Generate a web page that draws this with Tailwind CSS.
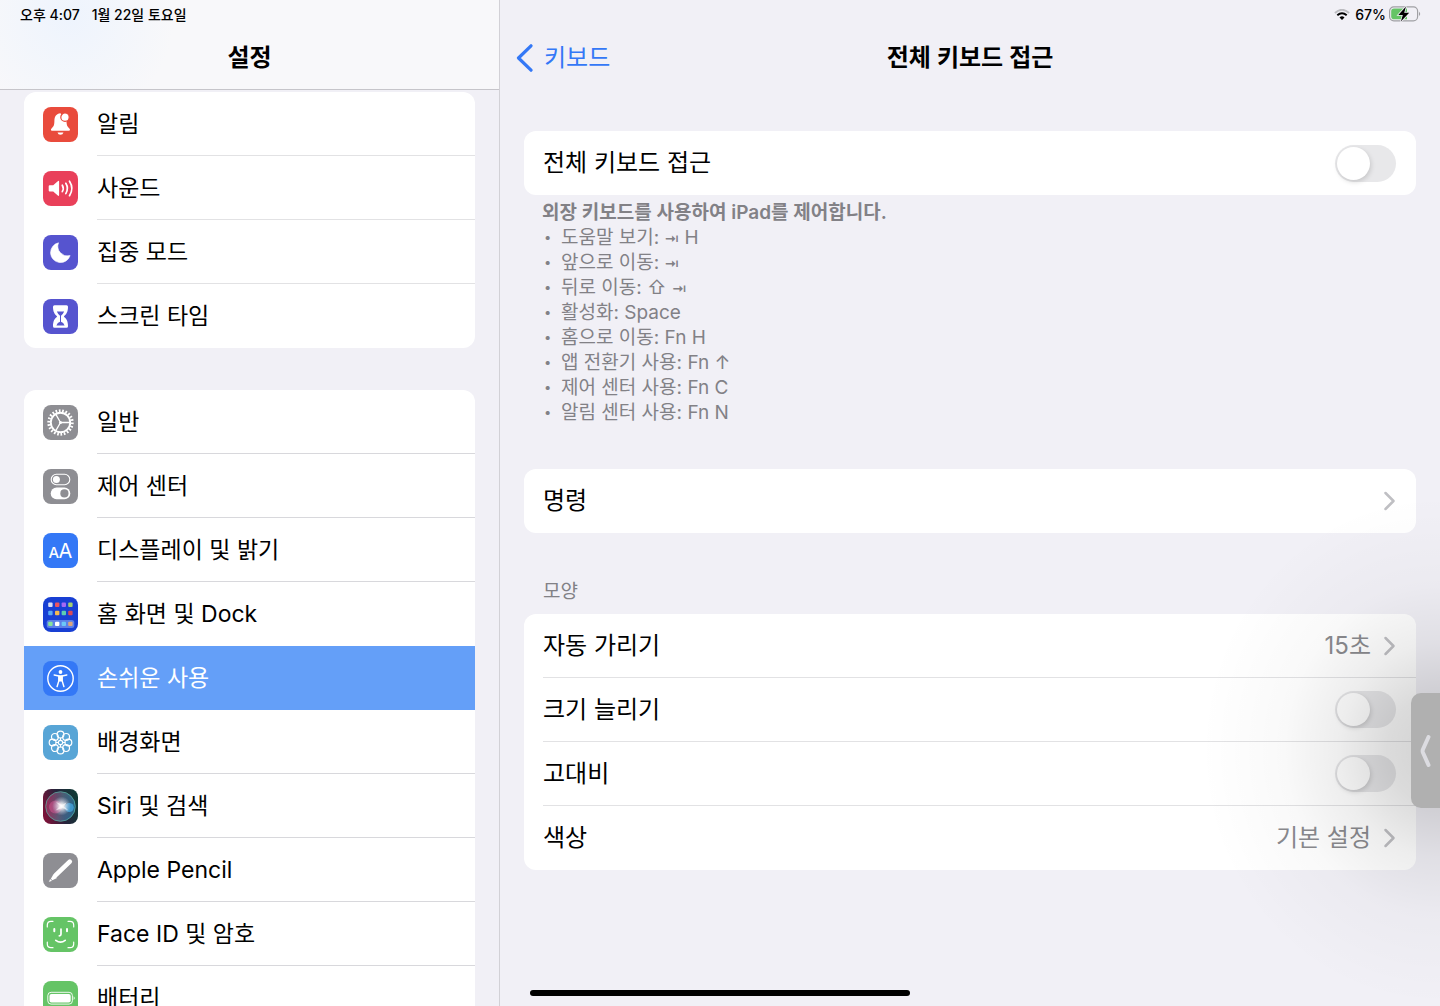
<!DOCTYPE html>
<html lang="ko">
<head>
<meta charset="utf-8">
<meta name="viewport" content="width=device-width, initial-scale=1">
<title>설정</title>
<script src="https://cdn.jsdelivr.net/npm/@tailwindcss/browser@4"></script>
</head>
<body class="bg-[#f1f0f6] text-black font-['Inter','Noto_Sans_CJK_KR',sans-serif]">
<div class="relative grid h-screen grid-cols-[25fr_47fr] overflow-hidden">

  <!-- Sidebar -->
  <aside class="flex min-h-0 flex-col border-r border-[#d2d1d6]">
    <header class="h-[90px] shrink-0 border-b border-[#c6c5ca] bg-[#f8f8fa] bg-[radial-gradient(circle_at_14%_20%,#eef4fd_0,#f8f8fa_24%)]">
      <div class="flex h-7 items-center gap-3 pl-5 text-[14px] font-medium"><span>오후 4:07</span><span>1월 22일 토요일</span></div>
      <h1 class="flex h-[59px] items-center justify-center text-[24px] font-semibold">설정</h1>
    </header>
    <nav class="flex min-h-0 flex-1 flex-col gap-[42px] overflow-y-auto px-6 pt-[2px] text-[23px] leading-8 [scrollbar-width:none]">
      <ul class="shrink-0 overflow-hidden rounded-xl bg-white">
        <li><a href="#" class="flex h-16 items-center gap-[19px] pl-[19px]">
          <svg class="size-[35px] shrink-0" viewBox="0 0 35 35"><rect width="35" height="35" rx="8" fill="#e94b3c"/><path d="M17.4 6.3c-4 .4-6 3.3-6 7.300 0 4.500-.7 6-2.600 7.600-1.300 1.100-1.200 2.500.3 2.500h16.700c1.500 0 1.600-1.400.3-2.500-1.900-1.600-2.500-3.100-2.700-7.600z" fill="#fff"/><path d="M14.500 25.400h6a3.100 3.100 0 0 1-6 0z" fill="#fff"/><circle cx="22" cy="10.200" r="4.200" fill="#fff" stroke="#e94b3c" stroke-width="1.200"/></svg>
          <span class="flex h-16 flex-1 items-center border-b border-[#e2e2e4]">알림</span></a></li>
        <li><a href="#" class="flex h-16 items-center gap-[19px] pl-[19px]">
          <svg class="size-[35px] shrink-0" viewBox="0 0 35 35"><rect width="35" height="35" rx="8" fill="#e9405a"/><path d="M5.700 15.300q0-1 1-1h3.500l4.600-4.100q1.300-.9 1.300.5v13.400q0 1.400-1.300.5l-4.600-4.100H6.700q-1 0-1-1z" fill="#fff"/><path d="M19.300 14.200q1.900 3.200 0 6.500M22.800 12.300q3.200 5.100 0 10.300M26.500 10.200q4.700 7.200 0 14.500" fill="none" stroke="#fff" stroke-width="1.700" stroke-linecap="round"/></svg>
          <span class="flex h-16 flex-1 items-center border-b border-[#e2e2e4]">사운드</span></a></li>
        <li><a href="#" class="flex h-16 items-center gap-[19px] pl-[19px]">
          <svg class="size-[35px] shrink-0" viewBox="0 0 35 35"><rect width="35" height="35" rx="8" fill="#5654cf"/><path d="M15.500 7.800A10 10 0 1 0 27.100 20.600 9.700 9.700 0 0 1 15.500 7.800z" fill="#fff" stroke="#fff" stroke-width=".6" stroke-linejoin="round"/></svg>
          <span class="flex h-16 flex-1 items-center border-b border-[#e2e2e4]">집중 모드</span></a></li>
        <li><a href="#" class="flex h-16 items-center gap-[19px] pl-[19px]">
          <svg class="size-[35px] shrink-0" viewBox="0 0 35 35"><rect width="35" height="35" rx="8" fill="#5654cf"/><path d="M11.500 6.300h12q1.500 0 1.500 1.500c0 5-1.500 7.300-4.200 9.700 2.700 2.400 4.200 4.700 4.200 9.700q0 1.500-1.500 1.500h-12q-1.500 0-1.500-1.500c0-5 1.500-7.300 4.200-9.700-2.700-2.400-4.200-4.700-4.200-9.700q0-1.500 1.500-1.500z" fill="#fff"/><path d="M13.800 12.600h7.400q-1 2.300-3.200 4.200v6q2.600.8 3.600 3.800h-8.200q1-3 3.600-3.800v-6q-2.200-1.900-3.200-4.200z" fill="#5654cf"/></svg>
          <span class="flex h-16 flex-1 items-center">스크린 타임</span></a></li>
      </ul>
      <ul class="shrink-0 overflow-hidden rounded-xl bg-white">
        <li><a href="#" class="flex h-16 items-center gap-[19px] pl-[19px]">
          <svg class="size-[35px] shrink-0" viewBox="0 0 35 35"><rect width="35" height="35" rx="8" fill="#8e8e93"/><g fill="none" stroke="#fff"><circle cx="17.500" cy="17.500" r="9.700" stroke-width="1.900"/><circle cx="17.500" cy="17.500" r="11.800" stroke-width="2.800" pathLength="44" stroke-dasharray="1 1"/><path d="M17.500 17.500h9.500M17.500 17.500l-4.800-8.300M17.500 17.500l-4.800 8.300" stroke-width="1.300"/></g><circle cx="17.500" cy="17.500" r="1.500" fill="#fff"/></svg>
          <span class="flex h-16 flex-1 items-center border-b border-[#d8d8dc]">일반</span></a></li>
        <li><a href="#" class="flex h-16 items-center gap-[19px] pl-[19px]">
          <svg class="size-[35px] shrink-0" viewBox="0 0 35 35"><rect width="35" height="35" rx="8" fill="#8e8e93"/><rect x="8.200" y="5.300" width="18.600" height="10.400" rx="5.200" fill="none" stroke="#fff" stroke-width="1.100"/><circle cx="13.400" cy="10.500" r="3.500" fill="#fff"/><rect x="7.700" y="18.500" width="19.600" height="11.800" rx="5.900" fill="#fff"/><circle cx="21.400" cy="24.400" r="4.100" fill="#8e8e93"/></svg>
          <span class="flex h-16 flex-1 items-center border-b border-[#d8d8dc]">제어 센터</span></a></li>
        <li><a href="#" class="flex h-16 items-center gap-[19px] pl-[19px]">
          <svg class="size-[35px] shrink-0" viewBox="0 0 35 35"><rect width="35" height="35" rx="8" fill="#3478f6"/><text x="5.500" y="25" fill="#fff" font-size="15" font-weight="500">A</text><text x="15.500" y="25" fill="#fff" font-size="20">A</text></svg>
          <span class="flex h-16 flex-1 items-center border-b border-[#d8d8dc]">디스플레이 및 밝기</span></a></li>
        <li><a href="#" class="flex h-16 items-center gap-[19px] pl-[19px]">
          <svg class="size-[35px] shrink-0" viewBox="0 0 35 35"><rect width="35" height="35" rx="8" fill="#183fd3"/><rect x="3.700" y="23" width="27.600" height="8" rx="2.500" fill="#5c80e8"/><g><rect x="5.200" y="5.500" width="4.400" height="4.400" rx="1" fill="#d7ddf6"/><rect x="12" y="5.500" width="4.400" height="4.400" rx="1" fill="#ec5560"/><rect x="18.600" y="5.500" width="4.400" height="4.400" rx="1" fill="#a468f5"/><rect x="25.200" y="5.500" width="4.400" height="4.400" rx="1" fill="#a4cf70"/><rect x="5.200" y="13.800" width="4.400" height="4.400" rx="1" fill="#58aaf5"/><rect x="12" y="13.800" width="4.400" height="4.400" rx="1" fill="#f3b850"/><rect x="18.600" y="13.800" width="4.400" height="4.400" rx="1" fill="#5dcdb0"/><rect x="25.200" y="13.800" width="4.400" height="4.400" rx="1" fill="#d84a59"/><rect x="5.200" y="24.700" width="4.400" height="4.400" rx="1" fill="#88e39a"/><rect x="12" y="24.700" width="4.400" height="4.400" rx="1" fill="#fff"/><rect x="18.600" y="24.700" width="4.400" height="4.400" rx="1" fill="#6bc8f8"/><rect x="25.200" y="24.700" width="4.400" height="4.400" rx="1" fill="#dca57e"/></g></svg>
          <span class="flex h-16 flex-1 items-center">홈 화면 및 Dock</span></a></li>
        <li><a href="#" aria-current="page" class="flex h-16 items-center gap-[19px] bg-[#649ff8] pl-[19px] text-white">
          <svg class="size-[35px] shrink-0" viewBox="0 0 35 35"><rect width="35" height="35" rx="8" fill="#3478f6"/><circle cx="17.500" cy="17.500" r="12.700" fill="none" stroke="#fff" stroke-width="1.400"/><circle cx="17.500" cy="11" r="1.900" fill="#fff"/><path d="M11.200 13.900l4.700 1v4.700l-1.800 6M23.800 13.900l-4.700 1v4.700l1.800 6" fill="none" stroke="#fff" stroke-width="1.500" stroke-linecap="round" stroke-linejoin="round"/><path d="M15.400 14.300h4.200v5.500l-.8.700h-2.600l-.8-.7z" fill="#fff"/></svg>
          <span>손쉬운 사용</span></a></li>
        <li><a href="#" class="flex h-16 items-center gap-[19px] pl-[19px]">
          <svg class="size-[35px] shrink-0" viewBox="0 0 35 35"><rect width="35" height="35" rx="8" fill="#58a5d6"/><g fill="none" stroke="#fff" stroke-width="1.200"><circle cx="17.500" cy="9.600" r="3.400"/><circle cx="23.100" cy="11.900" r="3.400"/><circle cx="25.400" cy="17.500" r="3.400"/><circle cx="23.100" cy="23.100" r="3.400"/><circle cx="17.500" cy="25.400" r="3.400"/><circle cx="11.900" cy="23.100" r="3.400"/><circle cx="9.600" cy="17.500" r="3.400"/><circle cx="11.900" cy="11.900" r="3.400"/><circle cx="17.500" cy="17.500" r="2.200"/><path d="M17.500 12.700v2.600M17.500 19.700v2.600M12.700 17.500h2.600M19.700 17.500h2.600"/></g></svg>
          <span class="flex h-16 flex-1 items-center border-b border-[#d8d8dc]">배경화면</span></a></li>
        <li><a href="#" class="flex h-16 items-center gap-[19px] pl-[19px]">
          <svg class="size-[35px] shrink-0" viewBox="0 0 35 35"><defs><linearGradient id="siri-bg" x1="0" x2="1" y1=".6" y2=".3"><stop stop-color="#7a1238"/><stop offset=".5" stop-color="#25243c"/><stop offset="1" stop-color="#103a35"/></linearGradient><linearGradient id="siri-orb" x1="0" x2="1" y1=".4" y2=".6"><stop stop-color="#c93670"/><stop offset=".5" stop-color="#7187a4"/><stop offset="1" stop-color="#2d8ed0"/></linearGradient><radialGradient id="siri-glow"><stop stop-color="#fff"/><stop offset=".3" stop-color="#fff" stop-opacity=".75"/><stop offset="1" stop-color="#d4d5ee" stop-opacity="0"/></radialGradient></defs><rect width="35" height="35" rx="8" fill="url(#siri-bg)"/><circle cx="17.500" cy="17.500" r="14.800" fill="url(#siri-orb)" fill-opacity=".55" stroke="#58b7a7" stroke-opacity=".7"/><circle cx="12.500" cy="18" r="6.500" fill="#e45b98" fill-opacity=".45"/><circle cx="26.300" cy="18.500" r="4.500" fill="#4bbdfa" fill-opacity=".6"/><circle cx="18.500" cy="17" r="9.500" fill="url(#siri-glow)"/><path d="M13 13l6 2.800 4.500-2.300-2.500 3.800 4.500 4.200-6-2.500-7 2.500 4.500-4.500z" fill="#fff" fill-opacity=".6"/></svg>
          <span class="flex h-16 flex-1 items-center border-b border-[#d8d8dc]">Siri 및 검색</span></a></li>
        <li><a href="#" class="flex h-16 items-center gap-[19px] pl-[19px]">
          <svg class="size-[35px] shrink-0" viewBox="0 0 35 35"><rect width="35" height="35" rx="8" fill="#8e8e93"/><path d="M26.800 8.700L12.700 22.200" stroke="#fff" stroke-width="4.600" stroke-linecap="round"/><path d="M10.400 21.300l3.600 3.600-4.600 2.300-1.500-1.500z" fill="#fff"/><path d="M7.300 26.400l1.300 1.300-2.300.8z" fill="#fff" stroke="#fff" stroke-width=".5"/></svg>
          <span class="flex h-16 flex-1 items-center border-b border-[#d8d8dc]">Apple Pencil</span></a></li>
        <li><a href="#" class="flex h-16 items-center gap-[19px] pl-[19px]">
          <svg class="size-[35px] shrink-0" viewBox="0 0 35 35"><rect width="35" height="35" rx="8" fill="#65c466"/><g fill="none" stroke="#fff" stroke-linecap="round"><path d="M4.300 10V8q0-3.700 3.700-3.700h2M25 4.300h2q3.700 0 3.700 3.700v2M30.700 25v2q0 3.700-3.700 3.700h-2M10 30.700H8q-3.700 0-3.700-3.700v-2" stroke-width="1.200"/><path d="M11.300 12v2.300M24 12v2.300" stroke-width="2"/><path d="M18 12v5.300q0 1.500-1.700 1.500M12.800 23.300q4.700 3.800 9.400 0" stroke-width="1.700"/></g></svg>
          <span class="flex h-16 flex-1 items-center border-b border-[#d8d8dc]">Face ID 및 암호</span></a></li>
        <li><a href="#" class="flex h-16 items-center gap-[19px] pl-[19px]">
          <svg class="size-[35px] shrink-0" viewBox="0 0 35 35"><rect width="35" height="35" rx="8" fill="#65c466"/><rect x="4.800" y="11.300" width="24.600" height="11.800" rx="3.300" fill="none" stroke="#fff" stroke-width=".9"/><rect x="6.500" y="12.900" width="21.200" height="8.600" rx="2" fill="#fff"/><path d="M30.700 15.300q2 1.900 0 3.800z" fill="#fff"/></svg>
          <span class="flex h-16 flex-1 items-center">배터리</span></a></li>
      </ul>
    </nav>
  </aside>

  <!-- Detail pane -->
  <main class="flex min-h-0 flex-col">
    <div class="flex h-7 shrink-0 items-center justify-end gap-[5px] pr-[19px] text-[14px] font-medium">
      <svg class="h-[11px] w-4" viewBox="0 0 16 11" fill="none"><path d="M.9 4Q8-2.400 15.100 4" stroke="#bcbcc1" stroke-width="1.900"/><path d="M3.300 6.300q4.700-4 9.400 0" stroke="#000" stroke-width="2"/><path d="M5.500 8.400q2.500-2.100 5 0L8 10.900z" fill="#000"/></svg>
      <span>67%</span>
      <svg class="-ml-[2px] h-4 w-8" viewBox="0 0 32 16"><rect x=".6" y=".9" width="28" height="14" rx="4.200" fill="none" stroke="#a0a0a4" stroke-width="1.200"/><path d="M5 2.600h13v10.600H5q-2.800 0-2.800-2.800V5.400Q2.200 2.600 5 2.600z" fill="#65c466"/><path d="M30 5.800q2.400 2.100 0 4.200z" fill="#a0a0a4"/><path d="M17 .5L9.300 8.900h4.500l-1.900 6.700 8.300-8.800h-5z" fill="#000" stroke="#f1f0f6" stroke-width="1.600" paint-order="stroke"/></svg>
    </div>
    <header class="grid h-[59px] shrink-0 grid-cols-[1fr_auto_1fr] items-center px-4 text-[24px] leading-8">
      <a href="#" class="flex items-center gap-[11px] justify-self-start text-[#3478f6]">
        <svg class="h-7 w-[17px]" viewBox="0 0 17 28" fill="none"><path d="M15 1.800L2.500 14 15 26.200" stroke="currentColor" stroke-width="3.200" stroke-linecap="round" stroke-linejoin="round"/></svg>
        키보드</a>
      <h2 class="font-semibold">전체 키보드 접근</h2>
    </header>

    <div class="min-h-0 flex-1 overflow-y-auto px-6 pt-11 [scrollbar-width:none]">
      <div class="rounded-xl bg-white pl-[19px] pr-5 text-[24px] leading-8">
        <label class="flex h-16 items-center justify-between">전체 키보드 접근
          <input type="checkbox" role="switch" class="h-[37px] w-[61px] appearance-none rounded-full bg-[#e8e8ea] p-[2px] before:block before:size-[33px] before:rounded-full before:bg-white before:shadow-[1px_2px_5px_rgba(0,0,0,0.15)] checked:bg-[#65c466] checked:before:ml-6">
        </label>
      </div>
      <div class="px-[18px] pt-[5px] text-[19px] leading-[25px] text-[#828186]">
        <p class="font-semibold">외장 키보드를 사용하여 iPad를 제어합니다.</p>
        <ul class="[&>li]:flex [&>li]:before:w-[19px] [&>li]:before:pl-[2px] [&>li]:before:text-[13px] [&>li]:before:content-['•']">
          <li><span>도움말 보기: <span class="text-[14px] font-semibold leading-none">⇥</span> H</span></li>
          <li><span>앞으로 이동: <span class="text-[14px] font-semibold leading-none">⇥</span></span></li>
          <li><span>뒤로 이동: <span class="leading-none">⇧</span> <span class="text-[14px] font-semibold leading-none">⇥</span></span></li>
          <li><span>활성화: Space</span></li>
          <li><span>홈으로 이동: Fn H</span></li>
          <li><span>앱 전환기 사용: Fn ↑</span></li>
          <li><span>제어 센터 사용: Fn C</span></li>
          <li><span>알림 센터 사용: Fn N</span></li>
        </ul>
      </div>

      <a href="#" class="mt-11 flex h-16 items-center justify-between rounded-xl bg-white pl-[19px] pr-5 text-[24px] leading-8">명령
        <svg class="h-5 w-[13px]" viewBox="0 0 13 20" fill="none"><path d="M2.500 2l8 8-8 8" stroke="#bfbfc3" stroke-width="2.500" stroke-linecap="round" stroke-linejoin="round"/></svg>
      </a>

      <h3 class="mt-[46px] px-[19px] pb-[10px] text-[19px] leading-[25px] text-[#828186]">모양</h3>
      <div class="rounded-xl bg-white pl-[19px] text-[24px] leading-8">
        <a href="#" class="flex h-16 items-center border-b border-[#e2e2e4] pr-5"><span class="flex-1">자동 가리기</span><span class="mr-3 text-[#8a8a8e]">15초</span>
          <svg class="h-5 w-[13px]" viewBox="0 0 13 20" fill="none"><path d="M2.500 2l8 8-8 8" stroke="#bfbfc3" stroke-width="2.500" stroke-linecap="round" stroke-linejoin="round"/></svg></a>
        <label class="flex h-16 items-center justify-between border-b border-[#e2e2e4] pr-5">크기 늘리기
          <input type="checkbox" role="switch" class="h-[37px] w-[61px] appearance-none rounded-full bg-[#e8e8ea] p-[2px] before:block before:size-[33px] before:rounded-full before:bg-white before:shadow-[1px_2px_5px_rgba(0,0,0,0.15)] checked:bg-[#65c466] checked:before:ml-6"></label>
        <label class="flex h-16 items-center justify-between border-b border-[#e2e2e4] pr-5">고대비
          <input type="checkbox" role="switch" class="h-[37px] w-[61px] appearance-none rounded-full bg-[#e8e8ea] p-[2px] before:block before:size-[33px] before:rounded-full before:bg-white before:shadow-[1px_2px_5px_rgba(0,0,0,0.15)] checked:bg-[#65c466] checked:before:ml-6"></label>
        <a href="#" class="flex h-16 items-center pr-5"><span class="flex-1">색상</span><span class="mr-3 text-[#8a8a8e]">기본 설정</span>
          <svg class="h-5 w-[13px]" viewBox="0 0 13 20" fill="none"><path d="M2.500 2l8 8-8 8" stroke="#bfbfc3" stroke-width="2.500" stroke-linecap="round" stroke-linejoin="round"/></svg></a>
      </div>
    </div>
  </main>

  <!-- Slide-over handle and home indicator -->
  <div class="pointer-events-none absolute right-0 bottom-0 h-[512px] w-60 bg-[radial-gradient(ellipse_240px_256px_at_100%_50%,rgba(0,0,0,0.18)_0,rgba(0,0,0,0.14)_22%,rgba(0,0,0,0.07)_42%,rgba(0,0,0,0.025)_65%,transparent_100%)]"></div>
  <button type="button" aria-label="슬라이드 오버 열기" class="absolute right-0 bottom-[198px] flex h-[115px] w-[29px] items-center justify-center rounded-l-[10px] bg-[#b0b0b0]">
    <svg class="h-8 w-3" viewBox="0 0 12 32" fill="none"><path d="M8.500 2L2.900 14.500q-.6 1.500 0 3L8.500 30" stroke="#dcdce1" stroke-width="4" stroke-linecap="round" stroke-linejoin="round"/></svg>
  </button>
  <div class="absolute bottom-[10px] left-1/2 h-[6px] w-[380px] -translate-x-1/2 rounded-full bg-black"></div>
</div>
</body>
</html>
